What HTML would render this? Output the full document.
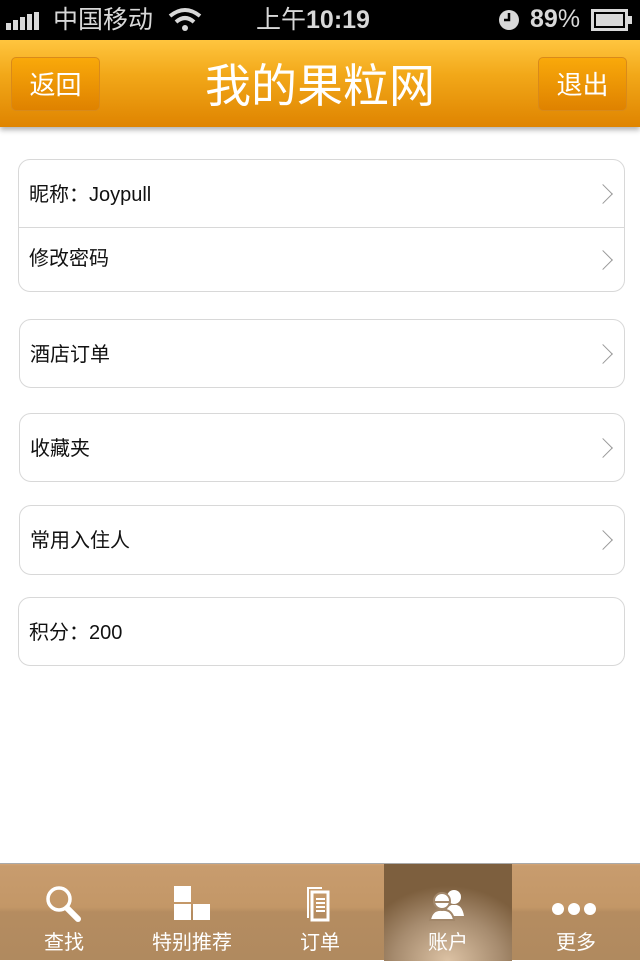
<!DOCTYPE html><html><head><meta charset="utf-8"><style>
*{margin:0;padding:0;box-sizing:border-box}
body{width:640px;height:960px;background:#fff;position:relative;overflow:hidden;font-family:"Liberation Sans","Noto Sans CJK SC",sans-serif}
.sb{position:absolute;top:0;left:0;width:640px;height:40px;background:#000;color:#d8d8d8;font-size:25px}
.sb>span{position:absolute;top:2px;line-height:36px}
.hd{position:absolute;top:40px;left:0;width:640px;height:87px;background:linear-gradient(#ffc53f,#f2a819 40%,#df8400);box-shadow:0 3px 5px rgba(0,0,0,.3)}
.btn{position:absolute;top:17px;width:89px;height:54px;border-radius:5px;background:linear-gradient(#f9a90a,#df8200);border:1px solid #d98a1a;color:#fff;font-size:26px;text-align:center;line-height:54px}
.tt{position:absolute;left:0;width:640px;top:16px;text-align:center;color:#fff;font-size:46px;line-height:60px}
.card{position:absolute;left:19px;width:606px;border:1px solid #d8d8d8;border-radius:12px;background:#fff}
.row{height:67px;position:relative;font-size:20px;color:#111;padding-left:10px;line-height:70px}
.row+.row{border-top:1px solid #d8d8d8;height:64px;line-height:62px}
.ch{position:absolute;right:14px;top:50%;width:14px;height:14px;border-top:1.5px solid #999;border-right:1.5px solid #999;transform:translateY(-50%) rotate(45deg)}
.tb{position:absolute;top:863px;left:0;width:640px;height:97px;background:linear-gradient(#d3a678 0,#c89c6e 2px,#c39767 45%,#b58c60 50%,#b08a5f);border-top:1px solid #aaa}
.tab{position:absolute;top:0;width:128px;height:97px;color:#fff;font-size:20px;text-align:center}
.tab .l{position:absolute;top:62px;width:100%}
.tab svg{position:absolute;left:44px;top:20px}
.act{background:radial-gradient(ellipse 90px 75px at 50% 100%,#dcc2a4,#a68b6e 60%,#7d5f3e)}
</style></head><body>
<div class="sb"><span style="left:6px;top:12px;font-size:0;line-height:0">
<svg width="40" height="18"><rect x="0" y="11" width="5" height="7" fill="#d8d8d8"/><rect x="7" y="8" width="5" height="10" fill="#d8d8d8"/><rect x="14" y="5" width="5" height="13" fill="#d8d8d8"/><rect x="21" y="2" width="5" height="16" fill="#d8d8d8"/><rect x="28" y="0" width="5" height="18" fill="#d8d8d8"/></svg></span>
<span style="left:53px">中国移动</span>
<span style="left:168px;top:6px;line-height:0"><svg width="34" height="26"><path d="M2 10 Q17 -2 32 10" stroke="#d8d8d8" stroke-width="4" fill="none"/><path d="M8 16 Q17 8 26 16" stroke="#d8d8d8" stroke-width="4" fill="none"/><circle cx="17" cy="22" r="3" fill="#d8d8d8"/></svg></span>
<span style="left:256px">上午<b>10:19</b></span>
<span style="left:498px;top:9px;line-height:0"><svg width="22" height="22"><circle cx="11" cy="11" r="10" fill="#d8d8d8"/><path d="M11 4V11H6" stroke="#000" stroke-width="2.5" fill="none"/></svg></span>
<span style="left:530px;top:1px"><b>89</b>%</span>
<span style="left:591px;top:9px;line-height:0"><svg width="42" height="22"><rect x="1.5" y="1.5" width="34" height="19" fill="none" stroke="#d8d8d8" stroke-width="3"/><rect x="5" y="5" width="27" height="12" fill="#d8d8d8"/><rect x="37" y="7" width="4" height="8" fill="#d8d8d8"/></svg></span>
</div>
<div class="hd"><div class="btn" style="left:11px">返回</div><div class="tt">我的果粒网</div><div class="btn" style="left:538px">退出</div></div>
<div class="card" style="top:159px;left:18px;width:607px"><div class="row">昵称：Joypull<i class="ch"></i></div><div class="row">修改密码<i class="ch"></i></div></div>
<div class="card" style="top:319px"><div class="row">酒店订单<i class="ch"></i></div></div>
<div class="card" style="top:413px"><div class="row">收藏夹<i class="ch"></i></div></div>
<div class="card" style="top:505px;height:70px"><div class="row">常用入住人<i class="ch"></i></div></div>
<div class="card" style="top:597px;left:18px;width:607px;height:69px"><div class="row">积分：200</div></div>
<div class="tb">
<div class="tab" style="left:0"><svg width="40" height="40"><circle cx="15" cy="15" r="11" stroke="#fff" stroke-width="3.5" fill="none"/><path d="M23 24L34 35" stroke="#fff" stroke-width="6" stroke-linecap="round"/></svg><div class="l">查找</div></div>
<div class="tab" style="left:128px"><svg width="40" height="40"><rect x="2" y="2" width="17" height="16" fill="#fff"/><rect x="2" y="20" width="17" height="16" fill="#fff"/><rect x="21" y="20" width="17" height="16" fill="#fff"/></svg><div class="l">特别推荐</div></div>
<div class="tab" style="left:256px"><svg width="40" height="40"><path d="M8 34V4H22" stroke="#fff" stroke-width="2" fill="none"/><rect x="12" y="8" width="16" height="28" stroke="#fff" stroke-width="3" fill="none"/><path d="M16 15h9M16 19h9M16 23h9M16 27h9" stroke="#fff" stroke-width="2"/></svg><div class="l">订单</div></div>
<div class="tab act" style="left:384px"><svg width="40" height="40"><circle cx="26" cy="13" r="7" fill="#fff"/><path d="M17 32Q19 20 26 21Q34 20 36 32Z" fill="#fff"/><circle cx="14" cy="17" r="8" fill="#fff" stroke="#a2876a" stroke-width="2"/><path d="M2 36Q4 25 14 26Q24 25 26 36Z" fill="#fff" stroke="#a2876a" stroke-width="2"/><path d="M7 18h14" stroke="#a2876a" stroke-width="2"/></svg><div class="l">账户</div></div>
<div class="tab" style="left:512px"><svg width="48" height="40" style="left:38px"><circle cx="8" cy="25" r="6" fill="#fff"/><circle cx="24" cy="25" r="6" fill="#fff"/><circle cx="40" cy="25" r="6" fill="#fff"/></svg><div class="l">更多</div></div>
</div>
</body></html>
